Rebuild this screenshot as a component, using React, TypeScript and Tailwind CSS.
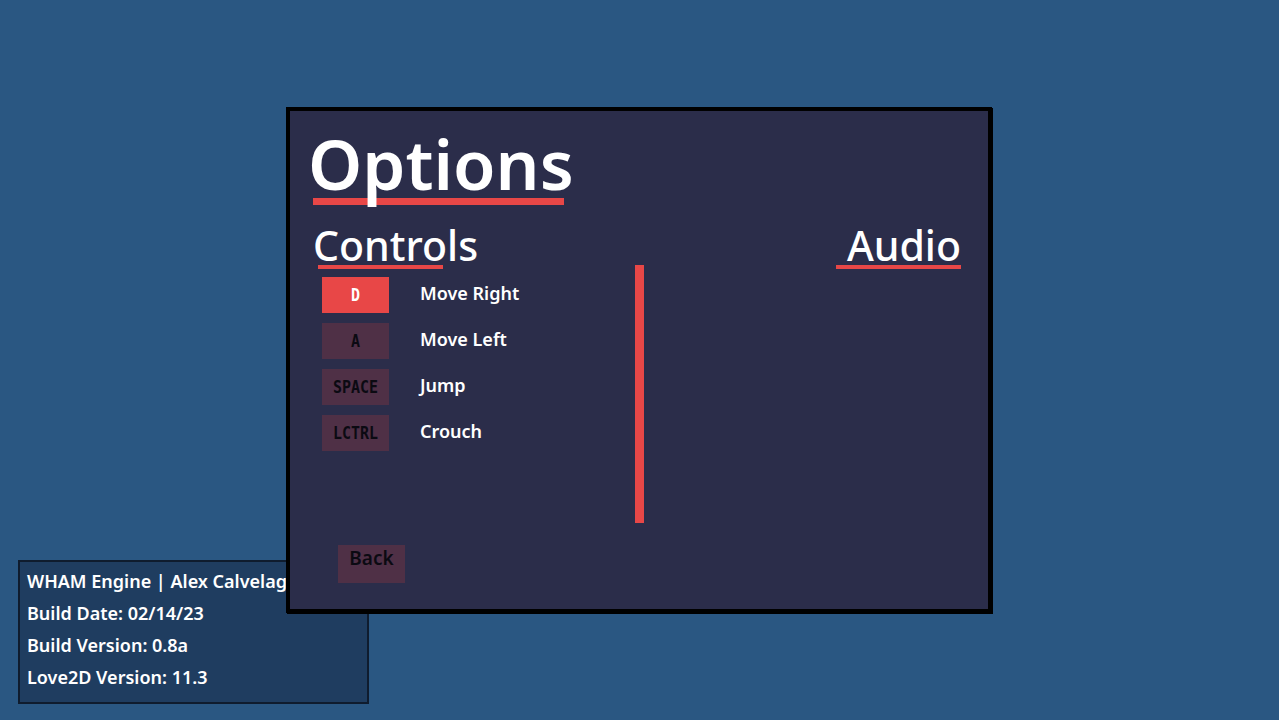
const keybinds = [
  { key: "D", action: "Move Right", active: true },
  { key: "A", action: "Move Left", active: false },
  { key: "SPACE", action: "Jump", active: false },
  { key: "LCTRL", action: "Crouch", active: false },
];

const buildInfo = [
  "WHAM Engine | Alex Calvelage",
  "Build Date: 02/14/23",
  "Build Version: 0.8a",
  "Love2D Version: 11.3",
];

function KeyRow({ keyName, action, active }: { keyName: string; action: string; active: boolean }) {
  return (
    <div className="flex items-center">
      <div
        className={
          active
            ? "flex h-[36px] w-[67px] items-center justify-center bg-[#e84747] text-white"
            : "flex h-[36px] w-[67px] items-center justify-center bg-[#4f3046] text-[#0b0a12]"
        }
      >
        <span className="font-['DejaVu_Sans_Mono',monospace] text-[15px] font-bold leading-none scale-y-[1.2]">
          {keyName}
        </span>
      </div>
      <span className="mb-[4px] ml-[31px] text-[18px] font-semibold leading-none text-white">{action}</span>
    </div>
  );
}

export default function App() {
  return (
    <div className="relative flex h-[720px] w-[1279px] flex-col justify-end overflow-hidden bg-[#2a5782] pb-[16px] pl-[18px] font-['Noto_Sans',sans-serif]">
      {/* build info panel, bottom left */}
      <div className="flex h-[144px] w-[351px] flex-col gap-[12px] overflow-hidden border-2 border-[#0f1c2e] bg-[#1f3d60] pl-[7px] pt-[9px]">
        {buildInfo.map((line) => (
          <div key={line} className="whitespace-nowrap text-[18px] font-semibold leading-[20px] text-white">
            {line}
          </div>
        ))}
      </div>

      {/* options window */}
      <div className="absolute left-[286px] top-[107px] flex h-[506px] w-[706px] flex-col border-4 border-black bg-[#2b2d4a] pl-[22px] shadow-[1px_1px_0_#000]">
        <div className="-ml-[4px] pt-[18px]">
          <h1 className="relative z-10 text-[69px] font-semibold leading-none text-white">Options</h1>
          <div className="ml-[5px] h-[7px] w-[251px] bg-[#e84747]" />
        </div>

        <div className="mt-[20px] flex items-start">
          <div className="w-[323px]">
            <h2 className="ml-[1px] text-[41px] font-medium leading-none text-white">Controls</h2>
            <div className="-mt-[1px] ml-[6px] h-[4px] w-[125px] bg-[#e84747]" />
            <div className="ml-[10px] mt-[8px] flex flex-col gap-[10px]">
              {keybinds.map((k) => (
                <KeyRow key={k.key} keyName={k.key} action={k.action} active={k.active} />
              ))}
            </div>
          </div>

          <div className="mt-[40px] h-[258px] w-[9px] bg-[#e84747]" />

          <div className="flex flex-1 flex-col items-end pr-[27px]">
            <h2 className="text-[41px] font-medium leading-none text-white">Audio</h2>
            <div className="-mt-[1px] h-[4px] w-[125px] bg-[#e84747]" />
          </div>
        </div>

        <div className="ml-[26px] mt-[22px] flex h-[38px] w-[67px] justify-center bg-[#4f3046] pt-[4px]">
          <span className="text-[19px] font-semibold leading-none text-[#0b0a12]">Back</span>
        </div>
      </div>
    </div>
  );
}
